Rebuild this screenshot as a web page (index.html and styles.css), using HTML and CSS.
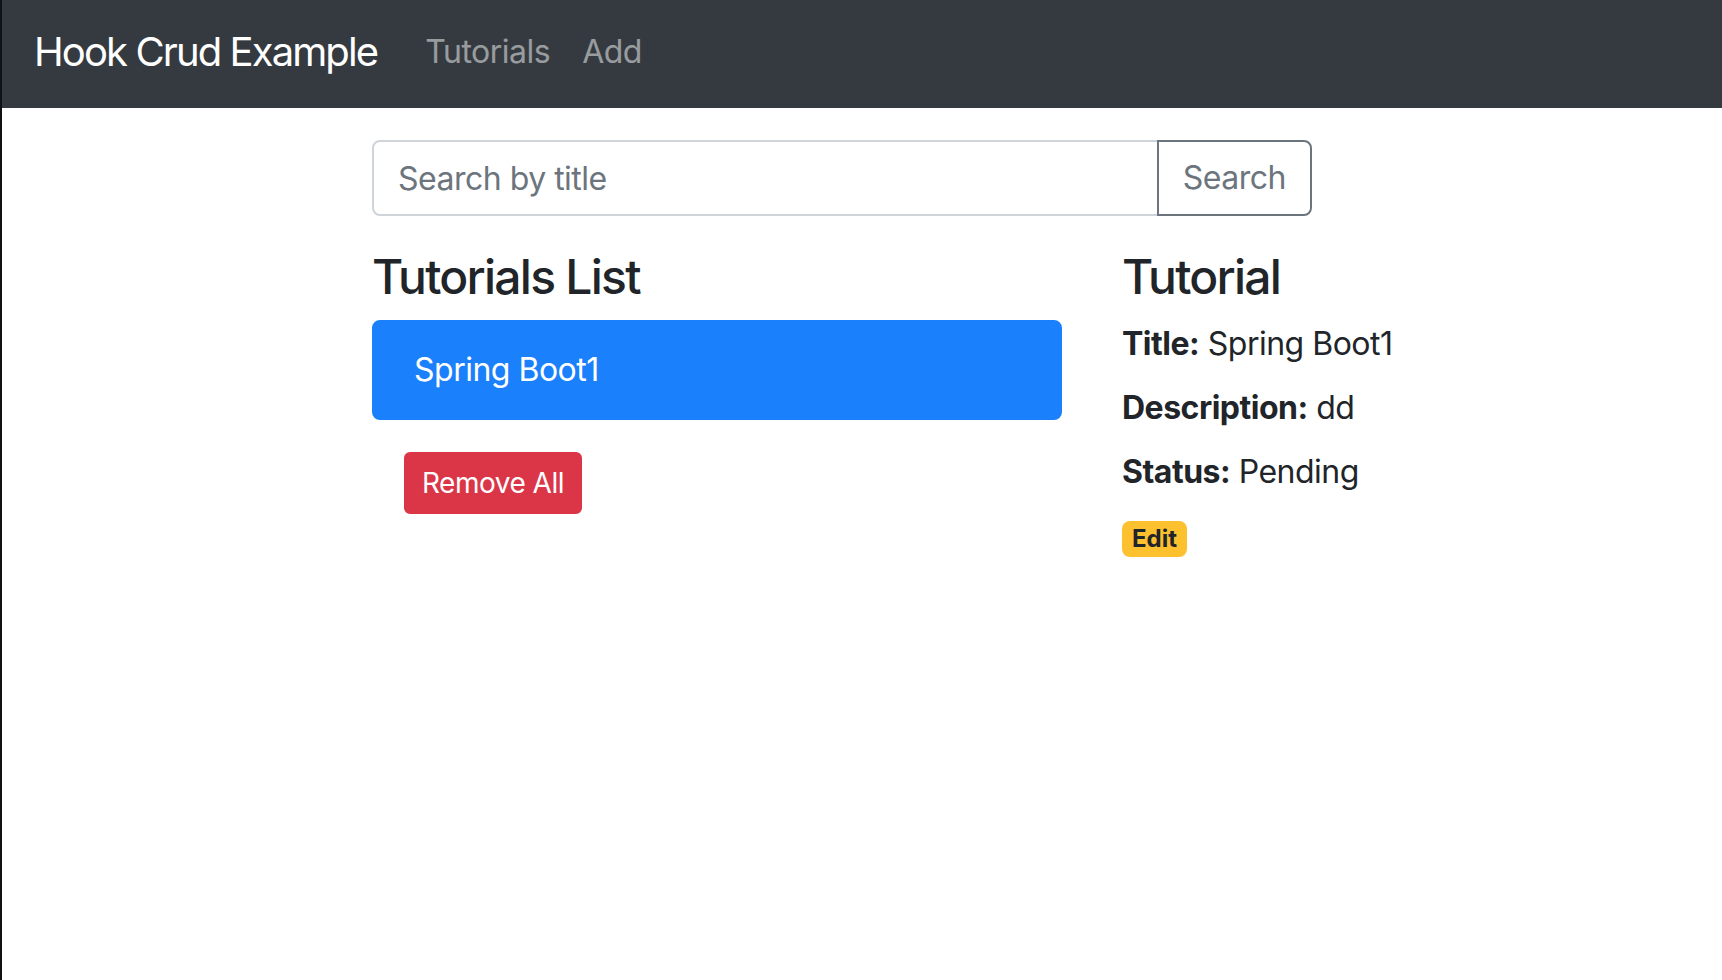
FILE: index.html
```html
<!DOCTYPE html>
<html lang="en">
<head>
<meta charset="utf-8">
<title>Hook Crud Example</title>
<link rel="stylesheet" href="styles.css">
</head>
<body>
<div class="page">
  <nav class="navbar">
    <a class="brand" href="#">Hook Crud Example</a>
    <div class="nav-links">
      <a class="nav-link" href="#">Tutorials</a>
      <a class="nav-link" href="#">Add</a>
    </div>
  </nav>
  <div class="container">
    <div class="list-row">
      <div class="col-8">
        <div class="input-group">
          <input class="form-control" type="text" placeholder="Search by title">
          <button class="btn-outline" type="button">Search</button>
        </div>
      </div>
      <div class="col-6">
        <h4 class="heading">Tutorials List</h4>
        <ul class="list-group">
          <li class="list-item active">Spring Boot1</li>
        </ul>
        <button class="btn-danger" type="button">Remove All</button>
      </div>
      <div class="col-6 col-detail">
        <h4 class="heading">Tutorial</h4>
        <div class="field"><label class="field-label"><strong>Title:</strong></label> Spring Boot1</div>
        <div class="field"><label class="field-label"><strong>Description:</strong></label> dd</div>
        <div class="field"><label class="field-label"><strong>Status:</strong></label> Pending</div>
        <a class="badge" href="#">Edit</a>
      </div>
    </div>
  </div>
</div>
</body>
</html>
```

FILE: styles.css
```css
* { box-sizing: border-box; }
html, body { margin: 0; padding: 0; }
body {
  font-family: Inter, "Noto Sans", "Liberation Sans", sans-serif;
  font-size: 32px;
  line-height: 48px;
  letter-spacing: -0.5px;
  color: #212529;
  background: #fff;
  overflow: hidden;
}
.page {
  min-height: 980px;
  border-left: 2px solid #101315;
}
.navbar {
  display: flex;
  align-items: center;
  height: 108px;
  padding: 12px 32px 16px 32px;
  background: #343a40;
}
.brand {
  font-size: 40px;
  line-height: 60px;
  padding: 10px 0;
  margin-right: 32px;
  color: #fff;
  text-decoration: none;
  letter-spacing: -1.9px;
}
.nav-links { display: flex; }
.nav-link {
  padding: 16px 16px;
  font-size: 32px;
  line-height: 48px;
  color: rgba(255,255,255,0.5);
  text-decoration: none;
}
.container { margin-top: 32px; }
.list-row {
  display: flex;
  flex-wrap: wrap;
  width: 1380px;
  margin-left: 340px;
}
.col-8 { width: 1000px; padding: 0 30px; }
.col-6 { width: 750px; padding: 0 30px; }
.col-detail { width: 630px; padding-right: 0; }
.input-group {
  display: flex;
  margin-bottom: 32px;
}
.form-control {
  flex: 1;
  min-width: 0;
  height: 76px;
  padding: 12px 24px;
  font-family: inherit;
  font-size: 32px;
  line-height: 48px;
  letter-spacing: inherit;
  color: #495057;
  border: 2px solid #ced4da;
  border-radius: 8px 0 0 8px;
  outline: none;
}
.form-control::placeholder { color: #6c757d; opacity: 1; }
.btn-outline {
  height: 76px;
  margin-left: -2px;
  padding: 12px 24px;
  font-family: inherit;
  font-size: 32px;
  line-height: 48px;
  letter-spacing: inherit;
  color: #6c757d;
  background: #fff;
  border: 2px solid #6c757d;
  border-radius: 0 8px 8px 0;
}
.heading {
  margin: 0 0 14px 0;
  font-size: 48px;
  line-height: 57.6px;
  font-weight: 500;
  letter-spacing: -1.75px;
}
.list-group { margin: 0; padding: 0; list-style: none; }
.list-item {
  padding: 24px 40px;
  border: 2px solid #1a80fb;
  border-radius: 8px;
  background: #1a80fb;
  color: #fff;
}
.btn-danger {
  margin: 32px;
  padding: 8px 16px;
  font-family: inherit;
  font-size: 28px;
  line-height: 42px;
  letter-spacing: inherit;
  color: #fff;
  background: #db3647;
  border: 2px solid #db3647;
  border-radius: 6px;
}
.field-label {
  display: inline-block;
  margin-bottom: 16px;
}
.field-label strong { font-weight: 700; }
.badge {
  display: inline-block;
  padding: 6px 10px;
  font-size: 24px;
  font-weight: 700;
  line-height: 1;
  letter-spacing: 0;
  color: #212529;
  background: #fdc02f;
  border-radius: 8px;
  text-decoration: none;
  vertical-align: baseline;
}
```
